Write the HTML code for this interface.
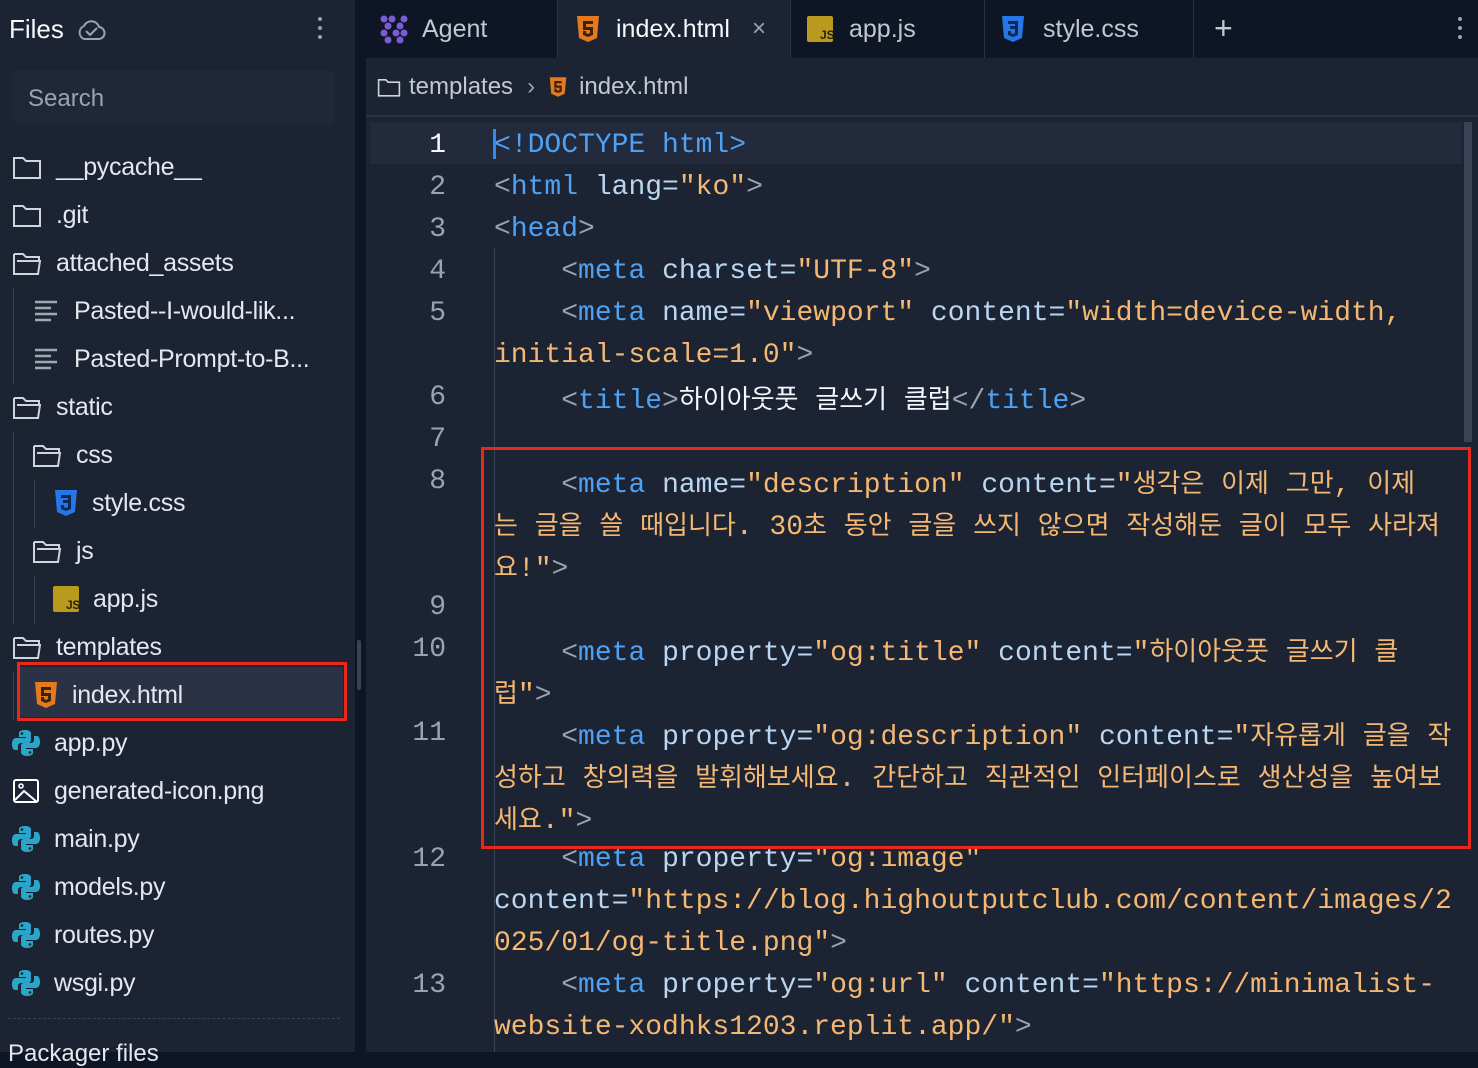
<!DOCTYPE html>
<html><head><meta charset="utf-8"><style>
*{margin:0;padding:0;box-sizing:border-box}
body{width:1478px;height:1052px;overflow:hidden;background:#0e1525;font-family:"Liberation Sans","Noto Sans CJK KR",sans-serif;color:#f5f9fc;position:relative}
.side{position:absolute;left:0;top:0;width:355px;height:1052px;background:#1c2333}
.gap{position:absolute;left:355px;top:0;width:11px;height:1052px;background:#0e1525}
.ed{position:absolute;left:366px;top:0;width:1112px;height:1052px;background:#1c2333}
.tabs{position:absolute;left:366px;top:0;width:1112px;height:58px;background:#0e1525}
.tab{position:absolute;top:0;height:58px;display:flex;align-items:center;font-size:25px;color:#c2c8d0;border-right:1px solid #2b3245}
.item{position:absolute;height:48px;display:flex;align-items:center;font-size:25px;color:#e4e8ee;letter-spacing:-0.3px}
.item svg{margin-right:14px;flex:none}
.code{position:absolute;font-family:"Liberation Mono",monospace;font-size:28px;white-space:pre;height:42px;line-height:42px;left:494px;color:#c2d8f0}
.ln{position:absolute;font-family:"Liberation Mono",monospace;font-size:28px;line-height:42px;width:60px;text-align:right;left:386px;color:#9aa3b0}
.t{color:#4ea1f3}.p{color:#9aa3b0}.a{color:#b9d6f2}.s{color:#f5b872}
i{font-style:normal;font-family:"Noto Sans CJK KR",sans-serif;font-size:26px;letter-spacing:0}
.guide{position:absolute;width:1px;background:#3a4255}
</style></head><body>
<div class="side"></div><div class="gap"></div><div class="ed"></div><div class="tabs"></div>

<div style="position:absolute;left:9px;top:14px;font-size:26px;color:#f5f9fc">Files</div>
<svg style="position:absolute;left:76px;top:18px" width="30" height="24" viewBox="0 0 30 24"><path d="M8 21h14a6 6 0 0 0 1-12 8 8 0 0 0-15-1A7 7 0 0 0 8 21z" fill="none" stroke="#9aa3b0" stroke-width="2"/><path d="M10 13l4 4 7-7" fill="none" stroke="#9aa3b0" stroke-width="2"/></svg>
<div style="position:absolute;left:318px;top:17px;width:4px;height:4px;border-radius:2px;background:#9aa3b0;box-shadow:0 9px 0 #9aa3b0,0 18px 0 #9aa3b0"></div>
<div style="position:absolute;left:12px;top:70px;width:323px;height:55px;background:#202736;border-radius:8px;font-size:24px;color:#9aa3b0;padding:15px 16px">Search</div>

<svg width="0" height="0" style="position:absolute"><defs>
<symbol id="fold" viewBox="0 0 30 26"><path d="M2 4h9l3 3h14v17H2z" fill="none" stroke="#d0d5dc" stroke-width="2"/></symbol>
<symbol id="folo" viewBox="0 0 30 26"><path d="M2 4h9l3 3h13v4M2 4v20h24l2-13H5" fill="none" stroke="#d0d5dc" stroke-width="2"/></symbol>
<symbol id="html" viewBox="0 0 24 28"><path d="M1 1h22l-2 22-9 4-9-4z" fill="#e37b1e"/><path d="M7 6h10v3h-7v3h7v8l-5 2-5-2v-4h3v2l2 1 2-1v-3H7z" fill="#3a2410"/></symbol>
<symbol id="css" viewBox="0 0 24 28"><path d="M1 1h22l-2 22-9 4-9-4z" fill="#2776e8"/><path d="M7 6h10v14l-5 2-5-2v-4h3v2l2 1 2-1v-4H9v-3h5V9H7z" fill="#0e2a55"/></symbol>
<symbol id="js" viewBox="0 0 26 26"><rect width="26" height="26" rx="2" fill="#b99a1e"/><text x="13" y="23" font-size="12" font-family="Liberation Sans" fill="#2a2208" font-weight="bold">JS</text></symbol>
<symbol id="py" viewBox="0 0 28 28"><path d="M13 1c-6 0-6 3-6 3v4h7v1H4S0 9 0 15s3 6 3 6h3v-4s0-3 3-3h7s3 0 3-3V4s0-3-6-3z" fill="#2aa6c9"/><path d="M15 27c6 0 6-3 6-3v-4h-7v-1h10s4 0 4-6-3-6-3-6h-3v4s0 3-3 3h-7s-3 0-3 3v6s0 4 6 4z" fill="#2aa6c9"/><circle cx="10" cy="4.5" r="1.3" fill="#1c2333"/><circle cx="18" cy="23.5" r="1.3" fill="#1c2333"/></symbol>
<symbol id="txt" viewBox="0 0 26 22"><path d="M1 2h22M1 8h16M1 14h22M1 20h16" stroke="#a0a7b2" stroke-width="2.5"/></symbol>
</defs></svg>

<div class="item" style="left:12px;top:143px"><svg width="30" height="26"><use href="#fold"/></svg>__pycache__</div>
<div class="item" style="left:12px;top:191px"><svg width="30" height="26"><use href="#fold"/></svg>.git</div>
<div class="item" style="left:12px;top:239px"><svg width="30" height="26"><use href="#folo"/></svg>attached_assets</div>
<div class="item" style="left:34px;top:287px"><svg width="26" height="22"><use href="#txt"/></svg>Pasted--I-would-lik...</div>
<div class="item" style="left:34px;top:335px"><svg width="26" height="22"><use href="#txt"/></svg>Pasted-Prompt-to-B...</div>
<div class="item" style="left:12px;top:383px"><svg width="30" height="26"><use href="#folo"/></svg>static</div>
<div class="item" style="left:32px;top:431px"><svg width="30" height="26"><use href="#folo"/></svg>css</div>
<div class="item" style="left:54px;top:479px"><svg width="24" height="28"><use href="#css"/></svg>style.css</div>
<div class="item" style="left:32px;top:527px"><svg width="30" height="26"><use href="#folo"/></svg>js</div>
<div class="item" style="left:53px;top:575px"><svg width="26" height="26"><use href="#js"/></svg>app.js</div>
<div class="item" style="left:12px;top:623px"><svg width="30" height="26"><use href="#folo"/></svg>templates</div>
<div style="position:absolute;left:20px;top:667px;width:323px;height:50px;background:#2b3245"></div>
<div class="item" style="left:34px;top:671px"><svg width="24" height="28"><use href="#html"/></svg>index.html</div>
<div class="item" style="left:12px;top:719px"><svg width="28" height="28"><use href="#py"/></svg>app.py</div>
<div class="item" style="left:12px;top:767px"><svg width="28" height="28" viewBox="0 0 28 28"><rect x="2" y="3" width="24" height="22" rx="2" fill="none" stroke="#fff" stroke-width="2"/><circle cx="9" cy="9" r="2" fill="none" stroke="#fff" stroke-width="1.6"/><path d="M3 23l9-9 13 11" fill="none" stroke="#fff" stroke-width="2"/></svg>generated-icon.png</div>
<div class="item" style="left:12px;top:815px"><svg width="28" height="28"><use href="#py"/></svg>main.py</div>
<div class="item" style="left:12px;top:863px"><svg width="28" height="28"><use href="#py"/></svg>models.py</div>
<div class="item" style="left:12px;top:911px"><svg width="28" height="28"><use href="#py"/></svg>routes.py</div>
<div class="item" style="left:12px;top:959px"><svg width="28" height="28"><use href="#py"/></svg>wsgi.py</div>
<div style="position:absolute;left:8px;top:1018px;width:332px;border-top:1px dashed #3a4255"></div>
<div style="position:absolute;left:8px;top:1040px;font-size:24px;color:#e4e8ee">Packager files</div>
<div class="guide" style="left:13px;top:287px;height:96px"></div>
<div class="guide" style="left:13px;top:431px;height:192px"></div>
<div class="guide" style="left:34px;top:479px;height:48px"></div>
<div class="guide" style="left:34px;top:575px;height:48px"></div>
<div class="guide" style="left:13px;top:671px;height:48px"></div>
<div style="position:absolute;left:17px;top:662px;width:330px;height:59px;border:3px solid #e8281b"></div>
<div style="position:absolute;left:357px;top:640px;width:4px;height:50px;background:#3a4255;border-radius:2px"></div>

<div class="tab" style="left:366px;width:192px;padding-left:12px;color:#c2c8d0"><svg width="32" height="32" viewBox="0 0 32 32" style="margin-right:12px"><g fill="#7b5cd6"><circle cx="6" cy="6" r="3.5"/><circle cx="14" cy="6" r="3.5"/><circle cx="26" cy="6" r="3.5"/><circle cx="10" cy="13" r="3.5"/><circle cx="22" cy="13" r="3.5"/><circle cx="6" cy="20" r="3.5"/><circle cx="18" cy="20" r="3.5"/><circle cx="26" cy="20" r="3.5"/><circle cx="10" cy="27" r="3.5"/><circle cx="22" cy="27" r="3.5"/></g></svg>Agent</div>
<div class="tab" style="left:558px;width:233px;padding-left:18px;background:#1c2333;color:#f5f9fc"><svg width="24" height="28" style="margin-right:16px"><use href="#html"/></svg>index.html<span style="margin-left:22px;color:#9aa3b0;font-size:24px">×</span></div>
<div class="tab" style="left:791px;width:194px;padding-left:16px"><svg width="26" height="26" style="margin-right:16px"><use href="#js"/></svg>app.js</div>
<div class="tab" style="left:985px;width:209px;padding-left:16px"><svg width="24" height="28" style="margin-right:18px"><use href="#css"/></svg>style.css</div>
<div style="position:absolute;left:1214px;top:10px;font-size:32px;color:#c2c8d0">+</div>
<div style="position:absolute;left:1458px;top:17px;width:4px;height:4px;border-radius:2px;background:#9aa3b0;box-shadow:0 9px 0 #9aa3b0,0 18px 0 #9aa3b0"></div>

<div style="position:absolute;left:366px;top:58px;width:1112px;height:59px;border-bottom:2px solid #2b3245;display:flex;align-items:center;padding-left:11px;font-size:24px;color:#c2c8d0">
<svg width="24" height="22" viewBox="0 0 30 26" style="margin-right:8px"><use href="#fold"/></svg>templates<span style="margin:0 14px;color:#9aa3b0">›</span><svg width="18" height="22" style="margin-right:12px"><use href="#html"/></svg>index.html</div>

<div style="position:absolute;left:370px;top:122px;width:1092px;height:42px;background:#232a3b"></div>
<div style="position:absolute;left:493px;top:129px;width:3px;height:30px;background:#2f8bf0"></div>
<div style="position:absolute;left:1464px;top:122px;width:8px;height:320px;background:#3a4255"></div>
<div class="guide" style="left:494px;top:248px;height:804px"></div>

<div style="position:absolute;left:0;top:3px;width:1478px;height:1052px">
<div class="ln" style="top:122px;color:#f5f9fc">1</div>
<div class="ln" style="top:164px">2</div>
<div class="ln" style="top:206px">3</div>
<div class="ln" style="top:248px">4</div>
<div class="ln" style="top:290px">5</div>
<div class="ln" style="top:374px">6</div>
<div class="ln" style="top:416px">7</div>
<div class="ln" style="top:458px">8</div>
<div class="ln" style="top:584px">9</div>
<div class="ln" style="top:626px">10</div>
<div class="ln" style="top:710px">11</div>
<div class="ln" style="top:836px">12</div>
<div class="ln" style="top:962px">13</div>

<div class="code" style="top:122px"><span class="t">&lt;!DOCTYPE html&gt;</span></div>
<div class="code" style="top:164px"><span class="p">&lt;</span><span class="t">html</span> <span class="a">lang=</span><span class="s">"ko"</span><span class="p">&gt;</span></div>
<div class="code" style="top:206px"><span class="p">&lt;</span><span class="t">head</span><span class="p">&gt;</span></div>
<div class="code" style="top:248px">    <span class="p">&lt;</span><span class="t">meta</span> <span class="a">charset=</span><span class="s">"UTF-8"</span><span class="p">&gt;</span></div>
<div class="code" style="top:290px">    <span class="p">&lt;</span><span class="t">meta</span> <span class="a">name=</span><span class="s">"viewport"</span> <span class="a">content=</span><span class="s">"width=device-width,</span></div>
<div class="code" style="top:332px"><span class="s">initial-scale=1.0"</span><span class="p">&gt;</span></div>
<div class="code" style="top:374px">    <span class="p">&lt;</span><span class="t">title</span><span class="p">&gt;</span><span style="color:#f5f9fc"><i>하이아웃풋</i> <i>글쓰기</i> <i>클럽</i></span><span class="p">&lt;/</span><span class="t">title</span><span class="p">&gt;</span></div>
<div class="code" style="top:458px">    <span class="p">&lt;</span><span class="t">meta</span> <span class="a">name=</span><span class="s">"description"</span> <span class="a">content=</span><span class="s">"<i>생각은</i> <i>이제</i> <i>그만</i>, <i>이제</i></span></div>
<div class="code s" style="top:500px"><i>는</i> <i>글을</i> <i>쓸</i> <i>때입니다</i>. 30<i>초</i> <i>동안</i> <i>글을</i> <i>쓰지</i> <i>않으면</i> <i>작성해둔</i> <i>글이</i> <i>모두</i> <i>사라져</i></div>
<div class="code s" style="top:542px"><i>요</i>!"<span class="p">&gt;</span></div>
<div class="code" style="top:626px">    <span class="p">&lt;</span><span class="t">meta</span> <span class="a">property=</span><span class="s">"og:title"</span> <span class="a">content=</span><span class="s">"<i>하이아웃풋</i> <i>글쓰기</i> <i>클</i></span></div>
<div class="code s" style="top:668px"><i>럽</i>"<span class="p">&gt;</span></div>
<div class="code" style="top:710px">    <span class="p">&lt;</span><span class="t">meta</span> <span class="a">property=</span><span class="s">"og:description"</span> <span class="a">content=</span><span class="s">"<i>자유롭게</i> <i>글을</i> <i>작</i></span></div>
<div class="code s" style="top:752px"><i>성하고</i> <i>창의력을</i> <i>발휘해보세요</i>. <i>간단하고</i> <i>직관적인</i> <i>인터페이스로</i> <i>생산성을</i> <i>높여보</i></div>
<div class="code s" style="top:794px"><i>세요</i>."<span class="p">&gt;</span></div>
<div class="code" style="top:836px">    <span class="p">&lt;</span><span class="t">meta</span> <span class="a">property=</span><span class="s">"og:image"</span></div>
<div class="code" style="top:878px"><span class="a">content=</span><span class="s">"https://blog.highoutputclub.com/content/images/2</span></div>
<div class="code" style="top:920px"><span class="s">025/01/og-title.png"</span><span class="p">&gt;</span></div>
<div class="code" style="top:962px">    <span class="p">&lt;</span><span class="t">meta</span> <span class="a">property=</span><span class="s">"og:url"</span> <span class="a">content=</span><span class="s">"https://minimalist-</span></div>
<div class="code" style="top:1004px"><span class="s">website-xodhks1203.replit.app/"</span><span class="p">&gt;</span></div>
</div>

<div style="position:absolute;left:481px;top:447px;width:990px;height:402px;border:3px solid #e8281b"></div>
</body></html>
